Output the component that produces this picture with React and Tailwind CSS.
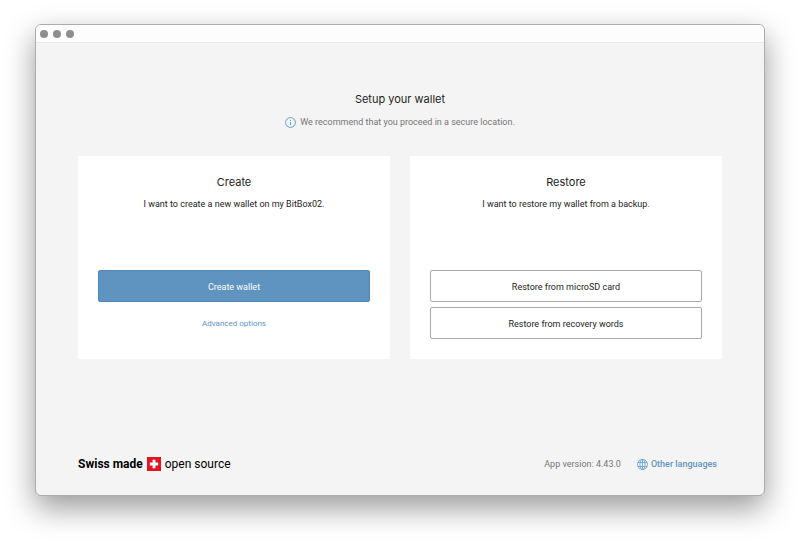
import clsx from "clsx";

const BUTTON_STYLES = {
  primary: "border-[#4f87b8] bg-[#5e94bf] text-white",
  secondary: "border-[#a9a9a9] bg-white text-[#1d1d1b]",
};

function Button({ variant = "primary", children }) {
  return (
    <button
      type="button"
      className={clsx(
        "h-8 w-full rounded-xs border pt-px font-[Roboto,sans-serif] text-[9px] leading-3",
        BUTTON_STYLES[variant]
      )}
    >
      {children}
    </button>
  );
}

function InfoIcon() {
  return (
    <svg
      className="size-[11px] shrink-0"
      viewBox="0 0 22 22"
      fill="none"
      stroke="#5e9fd4"
      strokeWidth="2"
      aria-hidden="true"
    >
      <circle cx="11" cy="11" r="9.8" />
      <path d="M11 10v6M11 6v2.2" />
    </svg>
  );
}

function GlobeIcon() {
  return (
    <svg
      className="size-[11px] shrink-0"
      viewBox="0 0 22 22"
      fill="none"
      stroke="#5e9fd4"
      strokeWidth="1.6"
      aria-hidden="true"
    >
      <circle cx="11" cy="11" r="10" />
      <ellipse cx="11" cy="11" rx="5" ry="10" />
      <path d="M2 7h18M2 15h18M11 1v20" />
    </svg>
  );
}

function SwissCross() {
  return (
    <svg className="size-[14px] shrink-0" viewBox="0 0 14 14" aria-hidden="true">
      <path fill="#e3141f" d="M0 0h14v14H0z" />
      <path
        fill="#fff"
        d="M5.6 2.8h2.8v2.8h2.8v2.8H8.4v2.8H5.6V8.4H2.8V5.6h2.8z"
      />
    </svg>
  );
}

function OptionCard({ title, text, children }) {
  return (
    <section className="flex flex-1 flex-col bg-white p-5 text-center">
      <h2 className="text-[11px] leading-3">{title}</h2>
      <p className="mt-[10px] font-[Roboto,sans-serif] text-[9px] leading-3">
        {text}
      </p>
      <div className="mt-[60px] flex flex-col gap-[5px]">{children}</div>
    </section>
  );
}

export default function App() {
  return (
    <div className="flex min-h-screen bg-white px-[35px] pt-6 pb-[46px] font-[Inter,sans-serif] text-[#1d1d1b]">
      <div className="flex flex-1 flex-col overflow-hidden rounded-md border border-[#acacac] bg-[#f4f4f4] shadow-[0_12px_30px_rgba(0,0,0,0.4)]">
        {/* Title bar */}
        <div className="flex h-[18px] items-center gap-[5px] border-b border-[#e8e8e8] bg-[#fdfdfd] px-1">
          <span className="size-2 rounded-full bg-[#8e8e8e]" />
          <span className="size-2 rounded-full bg-[#8e8e8e]" />
          <span className="size-2 rounded-full bg-[#8e8e8e]" />
        </div>

        {/* Wallet setup */}
        <main className="flex-1 px-[42px] pt-[50px]">
          <header className="flex flex-col items-center">
            <h1 className="text-[11px] leading-3">Setup your wallet</h1>
            <p className="mt-[11px] flex items-center gap-1 font-[Roboto,sans-serif] text-[9px] leading-3 text-[#777777]">
              <InfoIcon />
              We recommend that you proceed in a secure location.
            </p>
          </header>

          <div className="mt-7 flex gap-5">
            <OptionCard
              title="Create"
              text="I want to create a new wallet on my BitBox02."
            >
              <Button>Create wallet</Button>
              <button
                type="button"
                className="h-8 pt-px font-[Roboto,sans-serif] text-[8px] leading-3 text-[#5e94bf]"
              >
                Advanced options
              </button>
            </OptionCard>
            <OptionCard
              title="Restore"
              text="I want to restore my wallet from a backup."
            >
              <Button variant="secondary">Restore from microSD card</Button>
              <Button variant="secondary">Restore from recovery words</Button>
            </OptionCard>
          </div>
        </main>

        <footer className="flex items-center justify-between px-[42px] pb-[23px]">
          <div className="flex items-center gap-1 font-[Roboto,sans-serif] text-xs leading-4 text-black">
            <span className="font-bold">Swiss made</span>
            <SwissCross />
            <span>open source</span>
          </div>
          <div className="flex items-center gap-4 pr-[5px] font-[Roboto,sans-serif] text-[9px] leading-3">
            <span className="text-[#777777]">App version: 4.43.0</span>
            <button
              type="button"
              className="flex items-center gap-[3px] font-medium text-[#5e94bf]"
            >
              <GlobeIcon />
              Other languages
            </button>
          </div>
        </footer>
      </div>
    </div>
  );
}
